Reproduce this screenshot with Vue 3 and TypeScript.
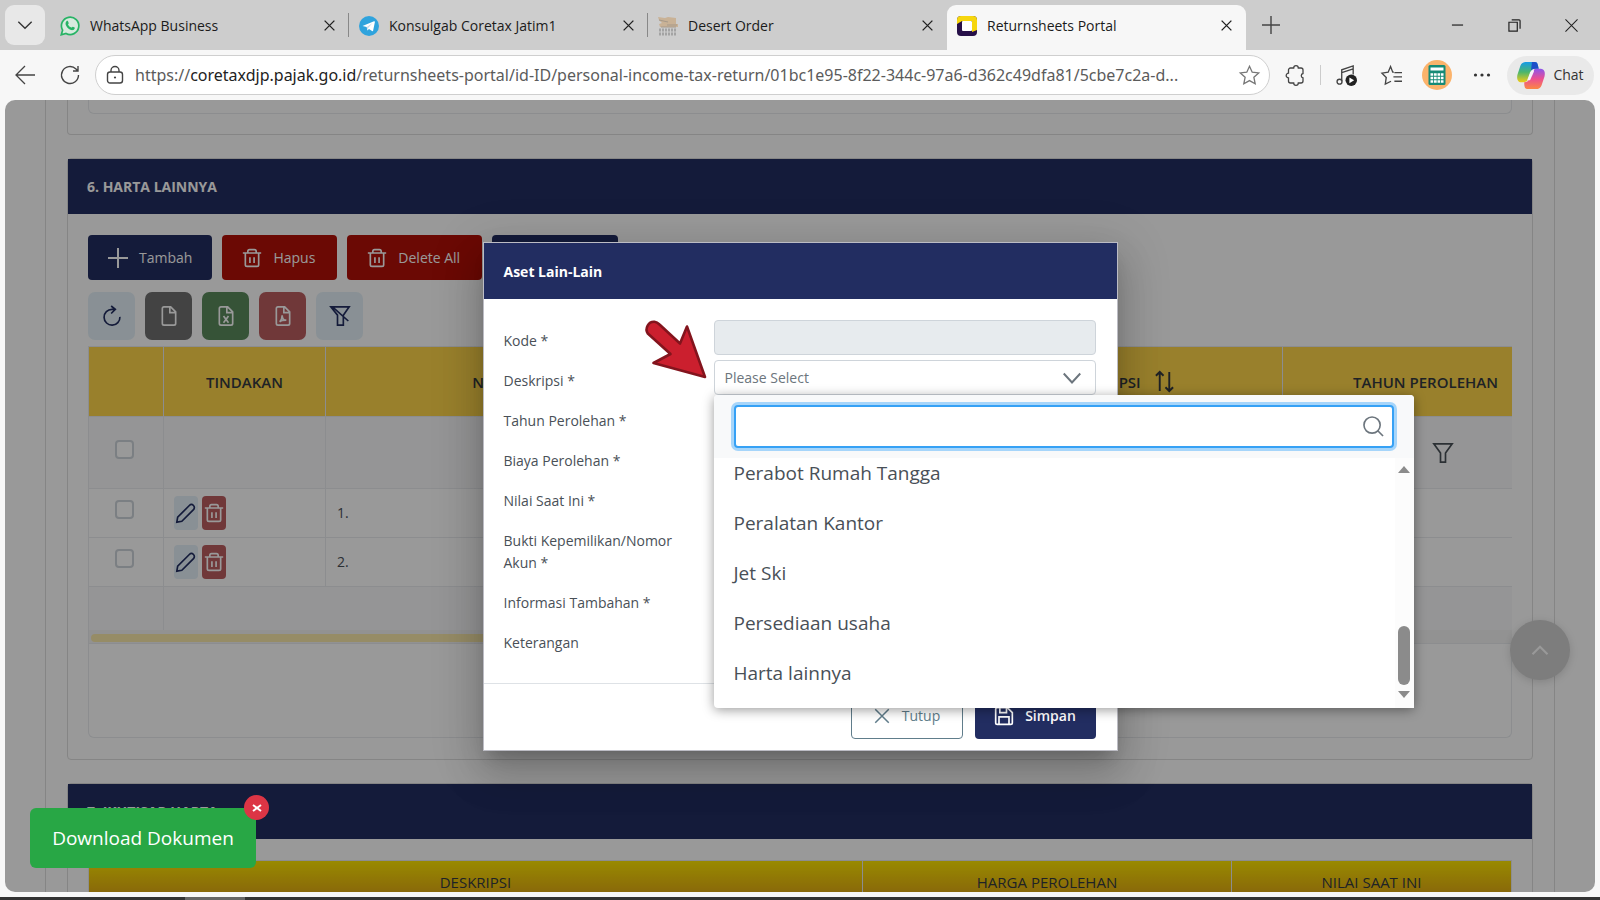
<script setup lang="ts">
import { ref } from 'vue'

interface BrowserTab {
  title: string
  kind: 'whatsapp' | 'telegram' | 'desert' | 'portal'
}

const tabs: BrowserTab[] = [
  { title: 'WhatsApp Business', kind: 'whatsapp' },
  { title: 'Konsulgab Coretax Jatim1', kind: 'telegram' },
  { title: 'Desert Order', kind: 'desert' },
  { title: 'Returnsheets Portal', kind: 'portal' },
]

const fields: string[] = [
  'Tahun Perolehan *',
  'Biaya Perolehan *',
  'Nilai Saat Ini *',
  'Bukti Kepemilikan/Nomor Akun *',
  'Informasi Tambahan *',
  'Keterangan',
]

const options: string[] = [
  'Perabot Rumah Tangga',
  'Peralatan Kantor',
  'Jet Ski',
  'Persediaan usaha',
  'Harta lainnya',
]

const rows: string[] = ['1.', '2.']
const selected = ref('')
const search = ref('')

const trash = 'M1 6h22M7 6V4a2 2 0 0 1 2-2h6a2 2 0 0 1 2 2v2M4 6v14a2 2 0 0 0 2 2h12a2 2 0 0 0 2-2V6M9.500 11v7M14.500 11v7'
const file = 'M6 1h8l6 6v14a2 2 0 0 1-2 2H6a2 2 0 0 1-2-2V3a2 2 0 0 1 2-2zM13 1v7h7'
const pencil = 'M1 23l1-6L16 3a3.500 3.500 0 0 1 5 5L7 22z'
const cross = 'M3 3l18 18M21 3L3 21'
const star = 'M12 1.500l3.100 6.800 7.400.8-5.500 5 1.500 7.400-6.500-3.700-6.500 3.700 1.500-7.400-5.500-5 7.400-.8z'
</script>

<template>
  <div class="browser">
    <header class="tabbar">
      <button class="tab-search" aria-label="Cari tab">
        <svg class="ic16" viewBox="0 0 24 24"><path d="M2 7l10 10L22 7" /></svg>
      </button>
      <nav class="tabs">
        <div v-for="tab in tabs" :key="tab.kind" class="tab" :class="{ active: tab.kind === 'portal' }">
          <svg v-if="tab.kind === 'whatsapp'" class="favicon" viewBox="0 0 20 20">
            <path d="M1.300 18.700l1.300-4.500A8.700 8.700 0 1 1 6 17.500z" fill="#d7eade" stroke="#27b365" stroke-width="1.700" />
            <path d="M6.500 5.200c.6-.7 1.300-.5 1.500 0l.7 1.700c.2.5-.6 1-.7 1.500.7 1.500 1.800 2.500 3.400 3.200.5-.1 1-1.100 1.500-.9l1.700.8c.7.500-.2 2.300-1.600 2.600C9.600 14.700 5 10 5.600 6.900c.1-.7.500-1.300.9-1.700z" fill="#27b365" stroke="none" />
          </svg>
          <svg v-else-if="tab.kind === 'telegram'" class="favicon" viewBox="0 0 20 20">
            <circle cx="10" cy="10" r="10" fill="#2fa3dd" stroke="none" />
            <path d="M3.500 10L15 5.200c.6-.2 1 .1.900.8l-1.800 8.700c-.1.600-.6.700-1.100.4l-3-2.200-1.700 1.600-.6-3.600z" fill="#fff" stroke="none" />
            <path d="M7.800 11l5.700-4.100-4.300 5-.7 2.600" fill="#c8daea" stroke="none" />
          </svg>
          <svg v-else-if="tab.kind === 'desert'" class="favicon" viewBox="0 0 20 20">
            <path d="M0 1l7 1 3-1 8 1v6h2v3H2l-1-3 3-1-3-3z" fill="#c9b296" stroke="none" />
            <path d="M1 4l9 2M9 9h10M3 11h15" stroke="#a6998a" stroke-width="1" />
            <path d="M1 14h18M1 18h18" stroke="#a3a3a3" stroke-width="3" stroke-dasharray="2 1" />
          </svg>
          <svg v-else class="favicon" viewBox="0 0 20 20">
            <rect width="20" height="20" rx="4" fill="#271049" stroke="none" />
            <path d="M4 0h12a4 4 0 0 1 4 4v10l-5 2V5H5L0 8V4a4 4 0 0 1 4-4z" fill="#f6d60e" stroke="none" />
            <rect x="5" y="5" width="10" height="10" rx="1" fill="#fff" stroke="none" />
          </svg>
          <span class="tab-title">{{ tab.title }}</span>
          <button class="tab-close" :aria-label="'Tutup ' + tab.title">
            <svg class="ic12" viewBox="0 0 24 24"><path :d="cross" stroke-width="2.500" /></svg>
          </button>
        </div>
      </nav>
      <button class="new-tab" aria-label="Tab baru">
        <svg class="ic18" viewBox="0 0 18 18"><path d="M9 0v18M0 9h18" stroke="#444" stroke-width="1.400" /></svg>
      </button>
      <div class="window-controls">
        <button aria-label="Minimalkan"><svg class="ic14" viewBox="0 0 14 14"><path d="M1 6.500h12" stroke-width="1.300" /></svg></button>
        <button aria-label="Pulihkan">
          <svg class="ic14" viewBox="0 0 14 14"><path d="M1 3.500h9v9.500H1zM4 1h8a1 1 0 0 1 1 1v8.500" stroke-width="1.300" /></svg>
        </button>
        <button aria-label="Tutup jendela"><svg class="ic14" viewBox="0 0 14 14"><path d="M.5.5l13 13M13.500.5l-13 13" stroke-width="1.100" /></svg></button>
      </div>
    </header>

    <div class="toolbar">
      <button class="tool" aria-label="Kembali">
        <svg class="ic20" viewBox="0 0 20 20"><path d="M20 10H1M10 1L1 10l9 9" stroke-width="1.300" /></svg>
      </button>
      <button class="tool" aria-label="Muat ulang">
        <svg class="ic20" viewBox="0 0 20 20"><path d="M18.500 10a8.500 8.500 0 1 1-2.500-6l2 2M18 1v5h-5" stroke-width="1.400" /></svg>
      </button>
      <div class="address">
        <svg class="ic18 lock" viewBox="0 0 18 18">
          <rect x="1.500" y="6" width="15" height="11" rx="2.500" stroke-width="1.400" />
          <path d="M5 6V4.500a4 4 0 0 1 8 0V6" stroke-width="1.400" /><circle cx="9" cy="11.500" r="1.100" fill="#444" stroke="none" />
        </svg>
        <div class="url" role="textbox" aria-label="Alamat">https://<b>coretaxdjp.pajak.go.id</b>/returnsheets-portal/id-ID/personal-income-tax-return/01bc1e95-8f22-344c-97a6-d362c49dfa81/5cbe7c2a-d...</div>
        <button class="star" aria-label="Favorit"><svg class="ic22" viewBox="0 0 24 24"><path :d="star" stroke="#777" stroke-width="1.500" /></svg></button>
      </div>
      <div class="extensions">
        <button class="tool" aria-label="Ekstensi">
          <svg class="ic20" viewBox="0 0 20 20"><path d="M5.500 3h3.200a2.300 2.300 0 0 1 4.600 0H16a2 2 0 0 1 2 2v3.500a2.200 2.200 0 0 0 0 4.300V16a2 2 0 0 1-2 2h-2.700a2.300 2.300 0 0 1-4.600 0H5.500a2 2 0 0 1-2-2v-3.200a2.300 2.300 0 1 1 0-4.600V5a2 2 0 0 1 2-2z" stroke-width="1.300" /></svg>
        </button>
        <span class="divider"></span>
        <button class="tool" aria-label="Media">
          <svg class="ic22" viewBox="0 0 22 22">
            <path d="M6 17V5l12-4v9M6 8l12-4" stroke-width="1.400" /><circle cx="3.700" cy="17.500" r="2.600" stroke-width="1.400" />
            <circle cx="16" cy="16" r="6" fill="#222" stroke="none" /><path d="M14 13v6l5-3z" fill="#fff" stroke="none" />
          </svg>
        </button>
        <button class="tool" aria-label="Daftar favorit">
          <svg class="ic22" viewBox="0 0 22 22"><path d="M13.500 7.500h-1.200L10 1.500 7.500 7.500 1 8.500l4.500 4.500L4.500 20l6-3M14 8h8M13 12.500h9M14 17h8" stroke-width="1.400" /></svg>
        </button>
        <button class="tool" aria-label="Profil">
          <svg class="ic30" viewBox="0 0 30 30">
            <circle cx="15" cy="15" r="15" fill="#fbb36b" stroke="none" /><rect x="6.500" y="5" width="17" height="20" rx="1.500" fill="#168a76" stroke="none" />
            <path d="M8.500 9h13" stroke="#fff" stroke-width="3" /><path d="M8.500 14.500h13M8.500 18h13M8.500 21.500h13" stroke="#fff" stroke-width="2.500" stroke-dasharray="2.700 .8" />
          </svg>
        </button>
        <button class="tool" aria-label="Menu">
          <svg class="ic18" viewBox="0 0 18 18"><g fill="#333" stroke="none"><circle cx="2.500" cy="9" r="1.600" /><circle cx="9" cy="9" r="1.600" /><circle cx="15.500" cy="9" r="1.600" /></g></svg>
        </button>
        <button class="chat">
          <svg class="ic28" viewBox="0 0 28 28">
            <defs>
              <linearGradient id="cl" x1="0" y1="0" x2="0" y2="1"><stop offset="0" stop-color="#159be8" /><stop offset=".5" stop-color="#4bb66c" /><stop offset="1" stop-color="#f3cb15" /></linearGradient>
              <linearGradient id="cr" x1="0" y1="0" x2="0" y2="1"><stop offset="0" stop-color="#8c55ec" /><stop offset=".5" stop-color="#ec4f91" /><stop offset="1" stop-color="#fb8743" /></linearGradient>
            </defs>
            <path d="M9 0h9c3 0 3 3 4 7h-4c-3 0-4 2-5 5l-2 6c-1 2-2 3-5 3H4c-4 0-5-4-4-8l3-9c1-3 3-4 6-4z" fill="url(#cl)" stroke="none" />
            <path d="M15 0h3c3 0 3 3 4 7h-4c-2 0-3 1-4 2z" fill="#1c4fc8" stroke="none" />
            <path d="M19 28h-9c-3 0-3-4-3-7 3 0 4-1 5-3l3-7c1-3 3-4 5-4h4c4 0 5 4 4 8l-3 9c-1 3-3 4-6 4z" fill="url(#cr)" stroke="none" />
            <path d="M17 10l-4 9h-3l3-8c1-2 2-3 4-3z" fill="#f7f2fa" stroke="none" />
          </svg>
          <span>Chat</span>
        </button>
      </div>
    </div>

    <main class="viewport">
      <div class="sheet">
        <section class="card previous"><div class="inner"></div></section>

        <section class="card harta">
          <h2 class="section-title">6. HARTA LAINNYA</h2>
          <div class="section-body">
            <div class="actions">
              <button class="btn navy"><svg class="ic20" viewBox="0 0 20 20"><path d="M10 0v20M0 10h20" /></svg>Tambah</button>
              <button class="btn red"><svg class="ic20" viewBox="0 0 24 24"><path :d="trash" /></svg>Hapus</button>
              <button class="btn red"><svg class="ic20" viewBox="0 0 24 24"><path :d="trash" /></svg>Delete All</button>
              <button class="btn navy blank" aria-label="Impor"></button>
            </div>
            <div class="exports">
              <button class="sq pale" aria-label="Segarkan"><svg class="ic20" viewBox="0 0 24 24"><path d="M21.500 13a9.500 9.500 0 1 1-9.500-9h4M11 0l5 4-5 5" /></svg></button>
              <button class="sq gray" aria-label="CSV"><svg class="ic20" viewBox="0 0 24 24"><path :d="file" /></svg></button>
              <button class="sq green" aria-label="Excel"><svg class="ic20" viewBox="0 0 24 24"><path :d="file" /><path d="M9 12l6 8M15 12l-6 8" /></svg></button>
              <button class="sq rose" aria-label="PDF"><svg class="ic20" viewBox="0 0 24 24"><path :d="file" /><path d="M8 19c2-2 3-4 3-8 0 4 2 6 5 6-4 0-6 0-8 2z" /></svg></button>
              <button class="sq pale" aria-label="Hapus filter"><svg class="ic20" viewBox="0 0 24 24"><path d="M1 1h22l-7 10v12H9V11zM3 1l19 17" /></svg></button>
            </div>
            <div class="table-box">
              <table>
                <colgroup><col class="c1"><col class="c2"><col class="c3"><col class="c3"><col class="c5"><col class="c6"></colgroup>
                <thead>
                  <tr class="titles">
                    <th></th><th>TINDAKAN</th><th>NO</th><th>KODE</th>
                    <th><span class="sortable">DESKRIPSI<svg class="ic22" viewBox="0 0 22 22"><path d="M6 21V1M2 5l4-4 4 4M16 1v20M12 17l4 4 4-4" /></svg></span></th>
                    <th><span class="sortable">TAHUN PEROLEHAN<svg class="ic22" viewBox="0 0 22 22"><path d="M6 21V1M2 5l4-4 4 4M16 1v20M12 17l4 4 4-4" /></svg></span></th>
                  </tr>
                  <tr class="filters">
                    <td><input type="checkbox" aria-label="Pilih semua"></td><td></td><td></td><td></td><td></td>
                    <td class="center"><svg class="ic20" viewBox="0 0 24 24"><path d="M1 1h22l-8 11v11H9V12z" /></svg></td>
                  </tr>
                </thead>
                <tbody>
                  <tr v-for="row in rows" :key="row">
                    <td><input type="checkbox" :aria-label="'Pilih baris ' + row"></td>
                    <td>
                      <div class="row-actions">
                        <button class="mini pale" aria-label="Ubah"><svg class="ic20" viewBox="0 0 24 24"><path :d="pencil" /></svg></button>
                        <button class="mini rose" aria-label="Hapus baris"><svg class="ic20" viewBox="0 0 24 24"><path :d="trash" /></svg></button>
                      </div>
                    </td>
                    <td class="num">{{ row }}</td><td></td><td></td><td></td>
                  </tr>
                </tbody>
                <tfoot><tr><td></td><td colspan="5"></td></tr></tfoot>
              </table>
              <div class="hscroll"><div class="hthumb"></div></div>
            </div>
            <div class="paginator"></div>
          </div>
        </section>

        <section class="card ikhtisar">
          <h2 class="section-title">7. IKHTISAR HARTA</h2>
          <div class="section-body summary">
            <table>
              <colgroup><col class="s1"><col class="s2"><col class="s3"></colgroup>
              <thead><tr><th>DESKRIPSI</th><th>HARGA PEROLEHAN</th><th>NILAI SAAT INI</th></tr></thead>
            </table>
          </div>
        </section>
      </div>

      <button class="to-top" aria-label="Ke atas"><svg class="ic20" viewBox="0 0 24 24"><path d="M3 17l9-9 9 9" stroke-width="2.500" /></svg></button>

      <div class="mask">
        <div class="dialog" role="dialog" aria-labelledby="dlg-title">
          <h1 id="dlg-title">Aset Lain-Lain</h1>
          <form class="form" @submit.prevent>
            <label for="kode">Kode *</label>
            <input id="kode" type="text" disabled>
            <label for="deskripsi">Deskripsi *</label>
            <div class="select-wrap">
              <select id="deskripsi" v-model="selected">
                <option value="">Please Select</option>
                <option v-for="o in options" :key="o">{{ o }}</option>
              </select>
              <svg class="ic18 chevron" viewBox="0 0 24 24"><path d="M1 6l11 12L23 6" stroke-width="2.600" /></svg>
              <div class="panel">
                <div class="panel-head">
                  <input v-model="search" type="text" aria-label="Cari deskripsi">
                  <svg class="ic22 glass" viewBox="0 0 22 22"><circle cx="9.500" cy="9.500" r="8.500" stroke-width="1.700" /><path d="M15.500 15.500l5.500 5.500" stroke-width="1.700" /></svg>
                </div>
                <div class="panel-body">
                  <ul role="listbox" aria-label="Deskripsi">
                    <li v-for="o in options" :key="o" role="option">{{ o }}</li>
                  </ul>
                  <div class="vscroll"><i class="up"></i><i class="thumb"></i><i class="down"></i></div>
                </div>
              </div>
              <svg class="pointer" viewBox="0 0 62 60">
                <path d="M2.800 13.500C-.5 8.500 3.500 1.300 9.500 1.800c2 .2 3.500 1.200 5 2.700L35 23.500 42 6.500 60 57 8.500 43 25.500 34z" fill="#cb1f2e" stroke="#83141d" stroke-width="2.600" stroke-linejoin="round" />
              </svg>
            </div>
            <template v-for="(f, i) in fields" :key="f">
              <label :for="'f' + i">{{ f }}</label>
              <input :id="'f' + i" type="text">
            </template>
          </form>
          <footer>
            <button class="btn outline"><svg class="ic18" viewBox="0 0 24 24"><path :d="cross" /></svg>Tutup</button>
            <button class="btn navy save"><svg class="ic20" viewBox="0 0 24 24"><path d="M4 2h12l6 6v12a2 2 0 0 1-2 2H4a2 2 0 0 1-2-2V4a2 2 0 0 1 2-2zM7 2v6h8V2M6 22v-9h12v9" /></svg>Simpan</button>
          </footer>
        </div>
      </div>

      <div class="download">
        <button class="download-btn">Download Dokumen</button>
        <button class="download-close" aria-label="Tutup unduhan"><svg class="ic8" viewBox="0 0 8 8"><path d="M0 1l8 6M8 1L0 7" stroke-width="2" /></svg></button>
      </div>
    </main>
    <div class="taskbar"><span></span></div>
  </div>
</template>

<style>
body { margin: 0; }
</style>

<style scoped>
* { box-sizing: border-box; }
.browser {
  height: 100vh; display: flex; flex-direction: column; overflow: hidden;
  background: #f7f7f7; color: #222; font: 14px/22px "Open Sans", "Noto Sans", sans-serif;
}
button { font: inherit; border: 0; padding: 0; background: none; color: inherit; display: flex; align-items: center; justify-content: center; }
svg { fill: none; stroke: currentColor; stroke-width: 2; flex: none; display: block; overflow: visible; }
.ic8 { width: 8px; height: 8px; }
.ic12 { width: 13px; height: 13px; }
.ic14 { width: 13px; height: 13px; }
.ic16 { width: 16px; height: 16px; }
.ic18 { width: 18px; height: 18px; }
.ic20 { width: 20px; height: 20px; }
.ic22 { width: 21px; height: 21px; }
.ic28 { width: 28px; height: 27px; }
.ic30 { width: 30px; height: 30px; }

.tabbar { height: 50px; flex: none; display: flex; align-items: flex-end; background: #cdcdcd; }
.tab-search { width: 40px; height: 40px; margin: 0 5px 5px; border-radius: 9px; background: #e8e8e8; color: #333; }
.tabs { display: flex; flex: 0 1 1196px; min-width: 0; }
.tab { flex: 1; min-width: 0; height: 45px; display: flex; align-items: center; padding: 0 12px 4px 10px; position: relative; }
.tab:not(.active)::after { content: ""; position: absolute; right: 0; top: 8px; height: 24px; width: 1px; background: #888; }
.tab:nth-child(3)::after { display: none; }
.active { background: #f7f7f7; border-radius: 9px 9px 0 0; }
.favicon { width: 20px; height: 20px; }
.tab-title { flex: 1; margin-left: 10px; white-space: nowrap; color: #1b1b1b; }
.tab-close { width: 16px; height: 20px; }
.new-tab { width: 50px; height: 50px; }
.window-controls { margin-left: auto; display: flex; }
.window-controls button { width: 57px; height: 50px; }

.toolbar { height: 50px; flex: none; display: flex; align-items: center; padding: 0 6px 0 2px; color: #444; }
.tool { width: 45px; height: 40px; }
.address { flex: 1; min-width: 0; height: 40px; margin-left: 3px; display: flex; align-items: center; background: #fff; border: 1px solid #cfcfcf; border-radius: 20px; padding: 0 8px 0 10px; }
.url { flex: 1; min-width: 0; margin-left: 11px; font-family: "Noto Sans", "Open Sans", sans-serif; font-size: 16px; white-space: nowrap; overflow: hidden; color: #5b5b5b; }
.url b { font-weight: 400; color: #222; }
.star { width: 24px; height: 30px; }
.extensions { display: flex; align-items: center; margin-left: 2px; }
.divider { width: 1px; height: 20px; background: #ccc; margin: 0 3px; }
.chat { width: 87px; height: 39px; gap: 8px; border-radius: 20px; background: #e9e9e9; color: #333; margin-left: 3px; }

.viewport { flex: 1; min-height: 0; margin: 0 5px; border-radius: 10px; overflow: hidden; background: #fff; position: relative; }
.sheet { margin: 0 40px; padding: 0 21px; border: solid #dedede; border-width: 0 1px; min-height: 100%; }
.card { border: 1px solid #dedede; border-radius: 4px; }
.previous { height: 35px; border-top: 0; border-radius: 0 0 4px 4px; padding: 0 20px; }
.inner { height: 14px; border: 1px solid #e9ecef; border-top: 0; border-radius: 0 0 6px 6px; }
.harta, .ikhtisar { margin-top: 23px; }
.section-title { margin: 0; height: 55px; padding: 0 19px; display: flex; align-items: center; background: #222d61; color: #fff; font-size: 14px; font-weight: 700; }
.section-body { padding: 21px 20px; }
.actions, .exports { display: flex; gap: 10px; }
.btn { height: 45px; padding: 0 20px; gap: 11px; border-radius: 4px; color: #fff; }
.navy { background: #222d61; }
.red { background: #b30f07; padding-right: 22px; }
.blank { width: 126px; }
.exports { margin: 12px 0 6px; }
.sq { width: 47px; height: 48px; border-radius: 7px; color: #fff; }
.pale { background: #e4f1f8; color: #222d61; }
.gray { background: #707070; }
.green { background: #5a8a5c; }
.rose { background: #bb5e60; color: #fff; }

table { border-collapse: collapse; table-layout: fixed; }
.table-box { overflow: hidden; border: 1px solid #e9ecef; border-right: 0; }
.table-box table { width: 1514px; margin: -1px; }
.c1 { width: 75px; } .c2 { width: 162px; } .c3 { width: 317px; } .c5 { width: 323px; } .c6 { width: 320px; }
th, td { padding: 0; border: 1px solid #e9ecef; }
th { font-size: 15px; font-weight: 600; color: #343a40; }
.titles { height: 70px; background: #ffd54a; }
.sortable { display: flex; align-items: center; justify-content: center; gap: 13px; }
.filters, tfoot tr { background: #f8f9fa; }
.filters { height: 72px; }
.filters .center svg { margin: 0 auto; color: #495057; }
tbody tr { height: 49px; }
tfoot tr { height: 44px; }
input[type="checkbox"] { appearance: none; display: block; margin: 0 0 7px 26px; width: 19px; height: 19px; border: 2px solid #ced4da; border-radius: 4px; background: #fff; }
.row-actions { display: flex; gap: 4px; padding-left: 10px; }
.mini { width: 24px; height: 34px; border-radius: 4px; }
.num { padding-left: 11px; color: #495057; }
.hscroll { height: 13px; background: #f4f4f4; padding: 4px 2px 1px; }
.hthumb { width: 66%; height: 8px; border-radius: 4px; background: #fbe9aa; }
.paginator { height: 94px; border: 1px solid #e9ecef; border-top: 0; border-radius: 0 0 6px 6px; }
.summary table { width: 100%; }
.summary { padding-bottom: 0; }
.s1 { width: 774px; } .s2 { width: 369px; }
.summary tr { height: 42px; background: linear-gradient(#ffe600, #dc9c17); }
.summary th { font-weight: 400; }
.ikhtisar { height: 200px; }

.to-top { position: absolute; right: 25px; bottom: 212px; width: 60px; height: 60px; border-radius: 50%; background: #d0d0d0; color: #fff; box-shadow: 0 2px 8px rgba(0, 0, 0, .15); }

.mask { position: absolute; inset: 0; background: rgba(0, 0, 0, .4); display: flex; align-items: center; justify-content: center; }
.dialog { width: 635px; background: #fff; border: 1px solid #bcbcc4; color: #495057; box-shadow: 0 11px 15px -7px rgba(0, 0, 0, .2), 0 24px 38px 3px rgba(0, 0, 0, .14), 0 9px 46px 8px rgba(0, 0, 0, .12); }
.dialog h1 { margin: 0; height: 56px; padding: 2px 20px 0; display: flex; align-items: center; background: #222d61; color: #fff; font-size: 14px; font-weight: 700; }
.form { display: grid; grid-template-columns: 1fr 382px; padding: 21px 21px 21px 20px; border-bottom: 1px solid #dee2e6; }
.form label { padding: 10px 30px 8px 0; }
.form > input, .form select { width: 100%; height: 35px; border: 1px solid #ced4da; border-radius: 4px; background: #fff; padding: 2px 10px 0; font: inherit; color: #6c757d; }
.form > input:disabled { background: #e7ebee; }
.form select { appearance: none; display: block; }
.select-wrap { position: relative; }
.chevron { position: absolute; right: 15px; top: 9px; color: #6c757d; }
.panel { position: absolute; z-index: 2; top: 35px; left: 0; width: 700px; background: #fff; border-radius: 4px; box-shadow: 0 2px 12px rgba(0, 0, 0, .4); font-size: 19px; }
.panel-head { position: relative; background: #f8f9fa; padding: 10px 20px; border-radius: 4px 4px 0 0; }
.panel-head input { display: block; width: 100%; height: 43px; border: 2px solid #36a1f5; border-radius: 4px; background: #fff; box-shadow: 0 0 0 3px #a6d5fa; padding: 0 40px 0 10px; font: inherit; outline: none; }
.glass { position: absolute; right: 30px; top: 21px; color: #6c757d; }
.panel-body { display: flex; height: 250px; }
.panel-body ul { flex: 1; list-style: none; margin: 0; padding: 0; overflow: hidden; }
.panel-body li { height: 50px; padding: 0 20px; line-height: 30px; }
.vscroll { width: 19px; display: flex; flex-direction: column; align-items: center; background: #fcfcfc; padding: 8px 0 10px; }
.up, .down { border: solid transparent; border-width: 0 6px; }
.up { border-bottom: 7px solid #8b8b8b; }
.down { border-top: 7px solid #8b8b8b; margin-top: 6px; }
.thumb { width: 12px; height: 59px; border-radius: 6px; background: #8b8b8b; margin-top: auto; }
.pointer { position: absolute; z-index: 3; right: 389px; top: -40px; width: 62px; height: 60px; }
.dialog footer { display: flex; justify-content: flex-end; gap: 12px; padding: 10px 21px 11px 20px; }
.outline { border: 1px solid #607d8b; color: #607d8b; width: 112px; }
.save { width: 121px; font-weight: 600; }

.download { position: absolute; left: 25px; bottom: 24px; }
.download-btn { height: 60px; width: 226px; border-radius: 6px; background: #28a745; color: #fff; font-size: 19px; }
.download-close { position: absolute; right: -13px; top: -13px; width: 25px; height: 25px; border-radius: 50%; background: #dc3545; color: #fff; }
.taskbar { flex: none; height: 8px; border-top: 5px solid #f7f7f7; background: #333; padding-left: 185px; }
.taskbar span { display: block; width: 60px; height: 3px; background: #666; }
</style>
